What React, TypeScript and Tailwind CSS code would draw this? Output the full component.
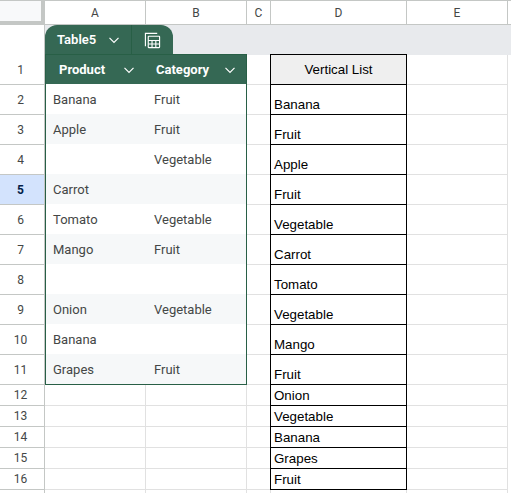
const rows = [
  { n: 1, h: 30 },
  { n: 2, h: 30 },
  { n: 3, h: 30 },
  { n: 4, h: 30 },
  { n: 5, h: 30 },
  { n: 6, h: 30 },
  { n: 7, h: 30 },
  { n: 8, h: 30 },
  { n: 9, h: 30 },
  { n: 10, h: 30 },
  { n: 11, h: 30 },
  { n: 12, h: 21 },
  { n: 13, h: 21 },
  { n: 14, h: 21 },
  { n: 15, h: 21 },
  { n: 16, h: 21 },
  { n: 17, h: 21 },
];

const tableRows = [
  ["Banana", "Fruit"],
  ["Apple", "Fruit"],
  ["", "Vegetable"],
  ["Carrot", ""],
  ["Tomato", "Vegetable"],
  ["Mango", "Fruit"],
  ["", ""],
  ["Onion", "Vegetable"],
  ["Banana", ""],
  ["Grapes", "Fruit"],
];

const listItems = [
  "Banana",
  "Fruit",
  "Apple",
  "Fruit",
  "Vegetable",
  "Carrot",
  "Tomato",
  "Vegetable",
  "Mango",
  "Fruit",
  "Onion",
  "Vegetable",
  "Banana",
  "Grapes",
  "Fruit",
];

const columns = ["A", "B", "C", "D", "E"];

function Chevron() {
  return (
    <svg width="12" height="12" viewBox="0 0 12 12" fill="none" stroke="currentColor" strokeWidth="1.2">
      <path d="M1.500 3.800 6 8.300l4.500-4.500" />
    </svg>
  );
}

function CalcIcon() {
  return (
    <svg width="17" height="17" viewBox="0 0 18 18" fill="none" stroke="white" strokeWidth="1.2">
      <path d="M14 1.500H1.500V15" />
      <rect x="4.500" y="4.500" width="12" height="12" rx="0.5" />
      <path d="M4.500 9h12M4.500 12.700h12M8.500 9v7.500M12.500 9v7.500" />
    </svg>
  );
}

export default function App() {
  return (
    <div className="h-[493px] w-[511px] overflow-hidden bg-white font-['Roboto',sans-serif]">
      {/* column headers */}
      <div className="flex h-[25px]">
        <div className="h-[25px] w-[45px] shrink-0 border-t border-r-4 border-b-4 border-[#c4c7c5] bg-[#f8f9fa]" />
        {columns.map((c) => (
          <div
            key={c}
            className={
              "flex shrink-0 items-center justify-center border-t border-r border-b border-[#c4c7c5] text-[12px] text-[#444746] " +
              (c === "C" ? "w-[24px]" : c === "D" ? "w-[136px]" : "w-[101px]")
            }
          >
            {c}
          </div>
        ))}
        <div className="grow border-t border-b border-[#c4c7c5]" />
      </div>

      {/* table tab strip */}
      <div className="flex h-[30px] bg-white">
        <div className="w-[45px] shrink-0 border-r border-[#c4c7c5]" />
        <div className="flex grow bg-[#e8eaed]">
          <div className="flex h-[30px] w-[128px] rounded-t-[12px] bg-[#356854] text-white">
            <div className="flex w-[87px] items-center gap-[12px] border-r border-[#285f46] pl-[12px] text-[13px] font-semibold">
              Table5
              <Chevron />
            </div>
            <div className="flex grow items-center justify-center">
              <CalcIcon />
            </div>
          </div>
        </div>
      </div>

      <div className="flex">
        {/* row headers */}
        <div className="w-[45px] shrink-0">
          {rows.map((r) => (
            <div
              key={r.n}
              style={{ height: r.h }}
              className={
                "flex items-center justify-center border-r border-b border-[#c4c7c5] pr-[3px] text-[12px] " +
                (r.n === 5 ? "bg-[#d3e3fd] font-bold text-[#041e49]" : "text-[#444746]")
              }
            >
              {r.n < 17 ? r.n : ""}
            </div>
          ))}
        </div>

        {/* cells */}
        <div className="relative flex">
          <div className="relative">
            {/* background grid for A and B */}
            <div className="flex">
              {["a", "b"].map((col) => (
                <div key={col} className="w-[101px]">
                  {rows.map((r) => (
                    <div key={r.n} style={{ height: r.h }} className="border-r border-b border-[#e1e1e1]" />
                  ))}
                </div>
              ))}
            </div>

            {/* converted table sits over the grid */}
            <div className="absolute -top-px left-0 w-[202px] border border-[#285f46] bg-white">
              <div className="grid h-[29px] grid-cols-[101px_1fr] bg-[#356854] pt-px text-[13px] font-bold text-white">
                <div className="flex items-center pl-[13px]">
                  <span className="w-[64px]">Product</span>
                  <Chevron />
                </div>
                <div className="flex items-center pl-[9px]">
                  <span className="w-[68px]">Category</span>
                  <Chevron />
                </div>
              </div>
              {tableRows.map((row, i) => (
                <div
                  key={i}
                  className={
                    "grid h-[30px] grid-cols-[101px_1fr] items-center pt-px text-[13px] text-[#444746] " +
                    (i % 2 === 1 ? "bg-[#f6f8f9]" : "bg-white")
                  }
                >
                  <div className="pl-[7px]">{row[0]}</div>
                  <div className="pl-[7px]">{row[1]}</div>
                </div>
              ))}
            </div>
          </div>

          <div className="w-[24px]">
            {rows.map((r) => (
              <div key={r.n} style={{ height: r.h }} className="border-r border-b border-[#e1e1e1]" />
            ))}
          </div>

          {/* Vertical List */}
          <div className="relative -mt-px w-[136px] font-['Liberation_Sans',sans-serif] text-[13.33px] leading-[18px] text-black">
            <div className="-ml-px flex h-[31px] items-center justify-center border border-black bg-[#efefef]">
              Vertical List
            </div>
            {listItems.map((item, i) => (
              <div
                key={i}
                style={{ height: rows[i + 1].h }}
                className="-ml-px flex items-end border-r border-b border-l border-black pl-[3px]"
              >
                {item}
              </div>
            ))}
            <div className="h-[21px] border-r border-b border-[#e1e1e1]" />
          </div>

          <div className="w-[101px]">
            {rows.map((r) => (
              <div key={r.n} style={{ height: r.h }} className="border-r border-b border-[#e1e1e1]" />
            ))}
          </div>
        </div>
      </div>
    </div>
  );
}
